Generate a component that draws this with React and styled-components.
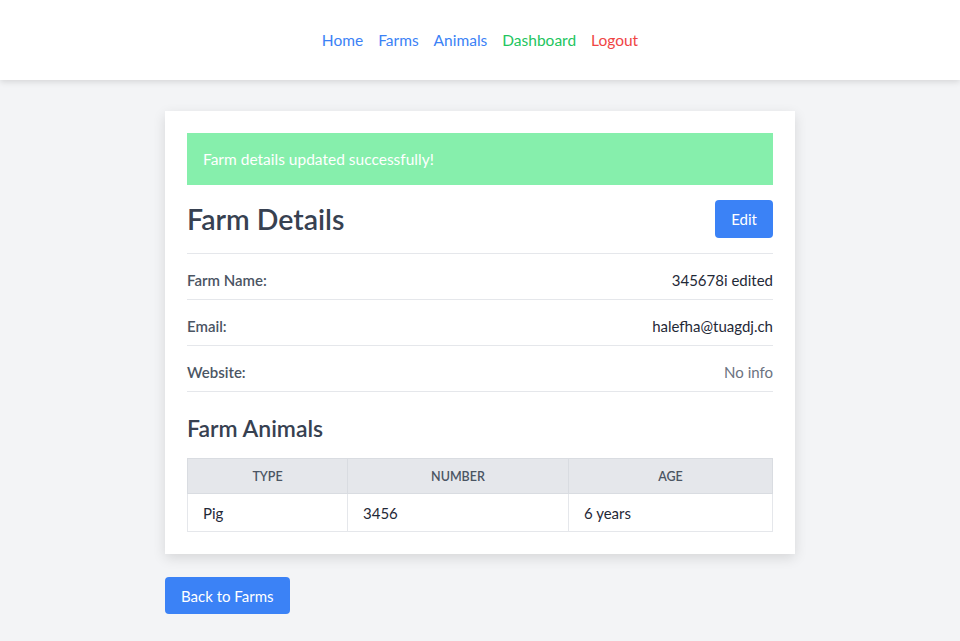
import React from 'react'
import styled, { createGlobalStyle } from 'styled-components'

const GlobalStyle = createGlobalStyle`
    body {
        margin: 0;
        background-color: #f3f4f6;
        font-family: Lato, "Open Sans", sans-serif;
        color: #1f2937;
    }
`

const NavBar = styled.nav`
    height: 80px;
    background-color: #ffffff;
    box-shadow: 0 2px 6px rgba(0, 0, 0, 0.12);
    display: flex;
    align-items: center;
    justify-content: center;
    gap: 15px;
`

const NavLink = styled.a`
    font-size: 15.5px;
    color: ${props => props.color || '#3b82f6'};
    text-decoration: none;
    cursor: pointer;
`

const Main = styled.main`
    width: 630px;
    margin: 31px auto 0;
`

const Card = styled.div`
    background-color: #ffffff;
    padding: 22px;
    box-shadow: 0 4px 12px rgba(0, 0, 0, 0.12);
`

const Alert = styled.div`
    height: 52px;
    display: flex;
    align-items: center;
    padding-left: 16px;
    background-color: #86efac;
    color: #ffffff;
    font-size: 15.5px;
`

const HeaderRow = styled.div`
    display: flex;
    align-items: center;
    justify-content: space-between;
    margin-top: 15px;
    padding-bottom: 15px;
    border-bottom: 1px solid #e5e7eb;
`

const Title = styled.h1`
    margin: 0;
    font-size: 28.5px;
    font-weight: 600;
    color: #374151;
`

const BlueButton = styled.button`
    height: ${props => props.h || 38}px;
    padding: 0 16px;
    border: none;
    border-radius: 4px;
    background-color: #3b82f6;
    color: #ffffff;
    font-family: inherit;
    font-size: 15px;
    cursor: pointer;
`

const InfoRow = styled.div`
    box-sizing: border-box;
    height: 46px;
    padding-top: 7px;
    display: flex;
    align-items: center;
    justify-content: space-between;
    border-bottom: 1px solid #e5e7eb;
    font-size: 15px;
`

const Label = styled.span`
    font-weight: 600;
    color: #4b5563;
`

const Value = styled.span`
    color: ${props => props.muted ? '#6b7280' : '#1f2937'};
`

const SubTitle = styled.h2`
    margin: 22px 0 16px;
    font-size: 23px;
    font-weight: 600;
    color: #374151;
`

const Table = styled.table`
    width: 100%;
    border-collapse: collapse;
    font-size: 15px;
`

const Th = styled.th`
    height: 32px;
    background-color: #e5e7eb;
    border: 1px solid #d9dce1;
    font-size: 12.5px;
    font-weight: 600;
    color: #4b5563;
    text-transform: uppercase;
    text-align: center;
`

const Td = styled.td`
    height: 37px;
    padding: 0 15px;
    border: 1px solid #e5e7eb;
    color: #1f2937;
`

const Footer = styled.div`
    margin-top: 23px;
`

const animals = [{ type: 'Pig', number: 3456, age: '6 years' }]

const App = () => {
    return (
        <>
            <GlobalStyle />
            <NavBar>
                <NavLink>Home</NavLink>
                <NavLink>Farms</NavLink>
                <NavLink>Animals</NavLink>
                <NavLink color='#22c55e'>Dashboard</NavLink>
                <NavLink color='#ef4444'>Logout</NavLink>
            </NavBar>
            <Main>
                <Card>
                    <Alert>Farm details updated successfully!</Alert>
                    <HeaderRow>
                        <Title>Farm Details</Title>
                        <BlueButton>Edit</BlueButton>
                    </HeaderRow>
                    <InfoRow>
                        <Label>Farm Name:</Label>
                        <Value>345678i edited</Value>
                    </InfoRow>
                    <InfoRow>
                        <Label>Email:</Label>
                        <Value>halefha@tuagdj.ch</Value>
                    </InfoRow>
                    <InfoRow>
                        <Label>Website:</Label>
                        <Value muted>No info</Value>
                    </InfoRow>
                    <SubTitle>Farm Animals</SubTitle>
                    <Table>
                        <thead>
                            <tr>
                                <Th style={{ width: 157 }}>Type</Th>
                                <Th style={{ width: 218 }}>Number</Th>
                                <Th>Age</Th>
                            </tr>
                        </thead>
                        <tbody>
                            {animals.map(a => (
                                <tr key={a.type}>
                                    <Td>{a.type}</Td>
                                    <Td>{a.number}</Td>
                                    <Td>{a.age}</Td>
                                </tr>
                            ))}
                        </tbody>
                    </Table>
                </Card>
                <Footer>
                    <BlueButton h={37}>Back to Farms</BlueButton>
                </Footer>
            </Main>
        </>
    )
}

export default App
